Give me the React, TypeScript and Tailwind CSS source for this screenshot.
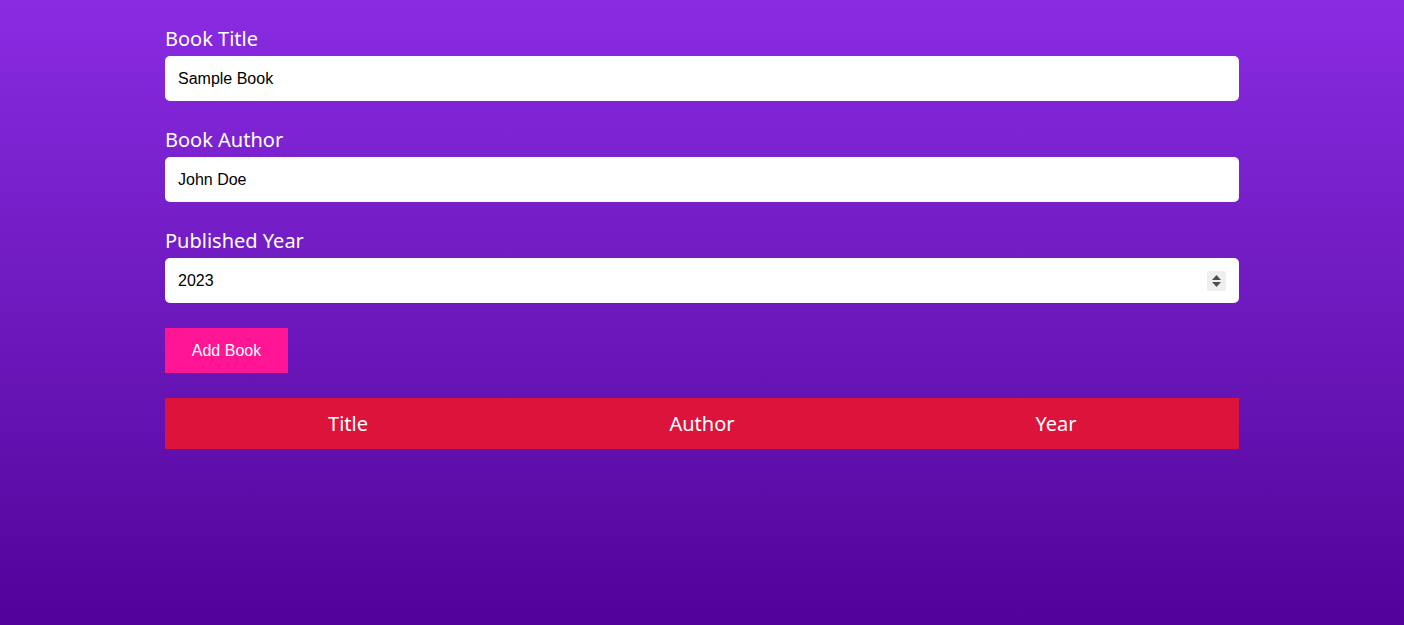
import React from "react";

export default function App() {
  const label = "block text-[20px] leading-[28px] mb-[3px] text-white font-['Noto_Sans',sans-serif]";
  const input =
    "block w-full h-[45px] rounded-[5px] bg-white px-[13px] text-[16px] text-black font-['Liberation_Sans',Arial,sans-serif] outline-none border-0";
  return (
    <div className="min-h-[625px] w-full bg-gradient-to-b from-[#8a2be2] to-[#52029a]">
      <div className="mx-auto w-[1074px] pt-[25px]">
        <div className="mb-[25px]">
          <label className={label}>Book Title</label>
          <input className={input} defaultValue="Sample Book" />
        </div>
        <div className="mb-[25px]">
          <label className={label}>Book Author</label>
          <input className={input} defaultValue="John Doe" />
        </div>
        <div className="mb-[25px]">
          <label className={label}>Published Year</label>
          <div className="relative">
            <input
              className={input + " [appearance:textfield] [&::-webkit-inner-spin-button]:appearance-none [&::-webkit-outer-spin-button]:appearance-none"}
              type="number"
              defaultValue={2023}
            />
            <div className="absolute right-[13px] top-[13px] flex h-[20px] w-[19px] flex-col items-center justify-center gap-[2px] rounded-[2px] bg-[#efefef]">
              <svg width="9" height="5" viewBox="0 0 9 5">
                <path d="M4.5 0 L9 5 L0 5 Z" fill="#4f4f4f" />
              </svg>
              <svg width="9" height="5" viewBox="0 0 9 5">
                <path d="M0 0 L9 0 L4.5 5 Z" fill="#4f4f4f" />
              </svg>
            </div>
          </div>
        </div>
        <button className="block h-[45px] w-[123px] bg-[#ff1493] text-white text-[16px] font-['Liberation_Sans',Arial,sans-serif] mb-[25px]">
          Add Book
        </button>
        <div className="grid grid-cols-[366px_1fr_366px] h-[51px] items-center bg-[#dc143c] text-white text-[20px] font-['Noto_Sans',sans-serif]">
          <div className="text-center">Title</div>
          <div className="text-center">Author</div>
          <div className="text-center">Year</div>
        </div>
      </div>
    </div>
  );
}
